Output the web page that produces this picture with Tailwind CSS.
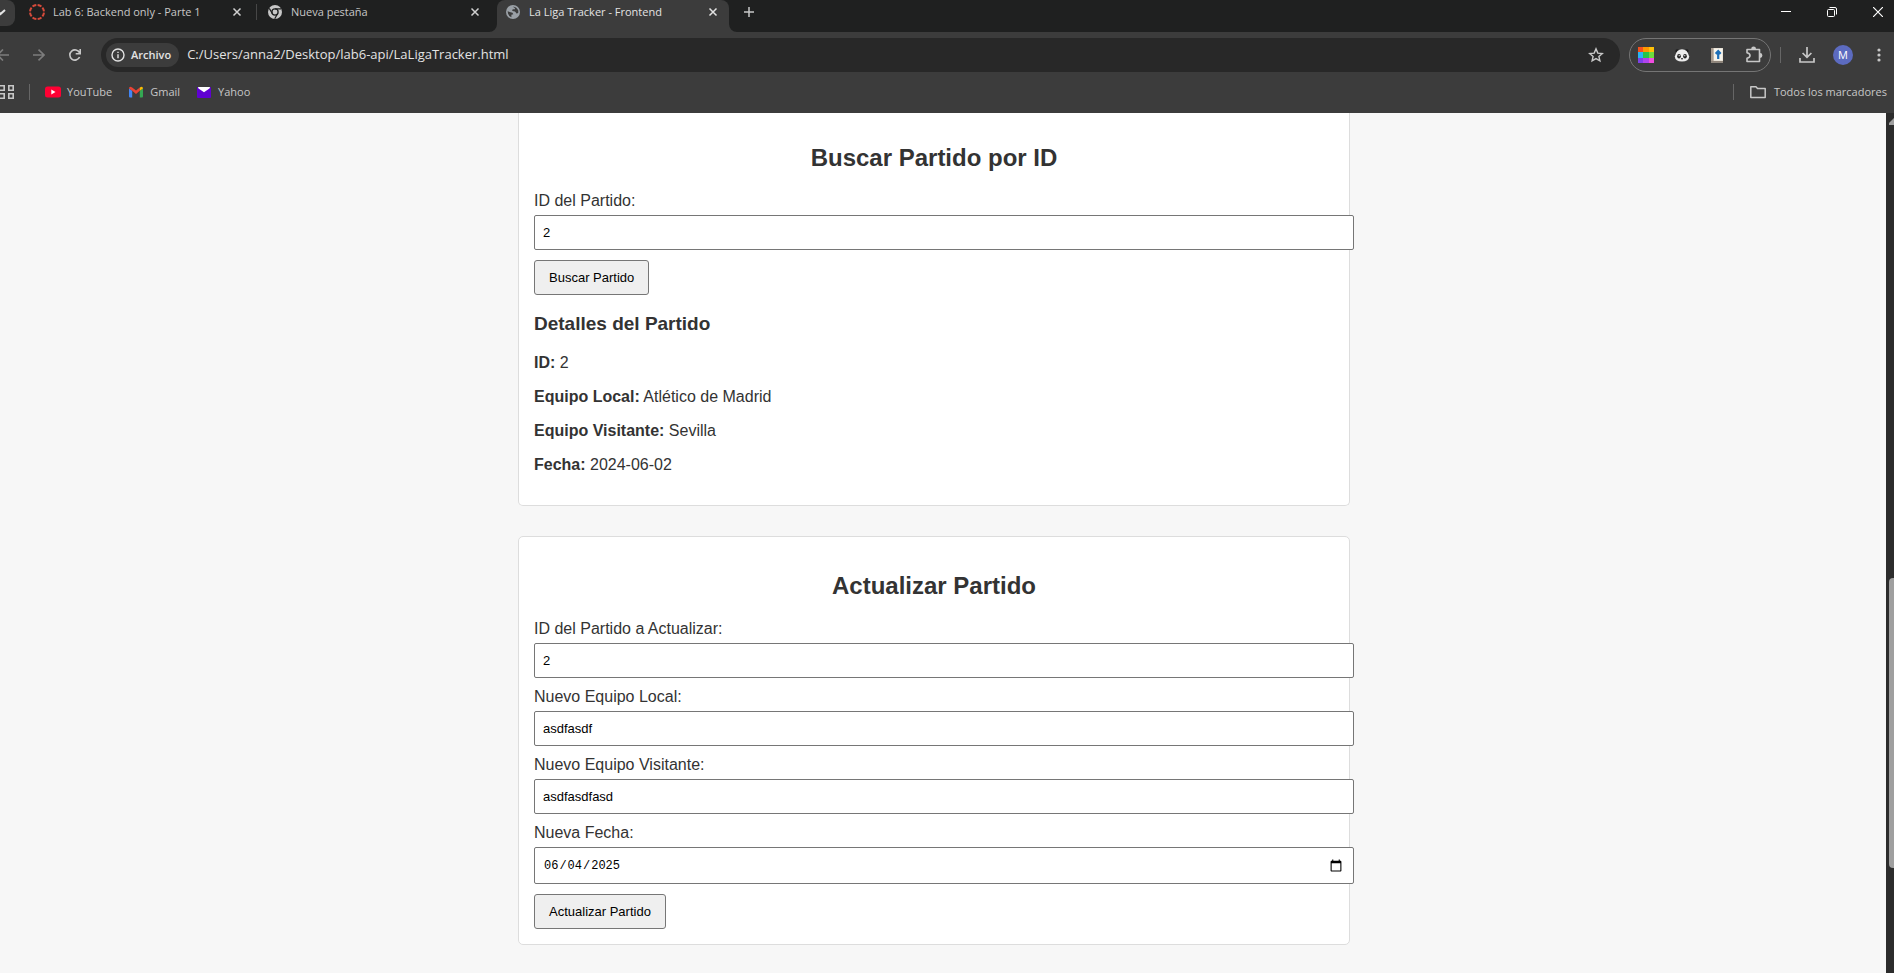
<!DOCTYPE html>
<html lang="es">
<head>
<meta charset="utf-8">
<title>La Liga Tracker - Frontend</title>
<script src="https://cdn.jsdelivr.net/npm/@tailwindcss/browser@4"></script>
</head>
<body class="h-screen overflow-hidden flex flex-col bg-[#f7f7f7] font-['Liberation_Sans',Arial,sans-serif] text-[#333]">
<header class="shrink-0 h-[113px] bg-[#3c3c3c] text-[#c7c7c7] font-['Open_Sans','Noto_Sans',sans-serif] text-[11px]">
  <!-- Tab strip -->
  <div class="h-8 bg-[#1f2020] flex items-start">
    <button aria-label="Buscar pestañas" class="w-[15px] h-[26px] bg-[#3c3c3c] rounded-br-lg rounded-tr-lg shrink-0">
      <svg class="block w-[15px] h-[26px]" viewBox="0 0 15 26" fill="none" stroke="#e3e3e3" stroke-width="2"><path d="M-3 10 L0.5 14 L5 10"/></svg>
    </button>
    <div class="w-[241px] h-6 flex items-center pl-[14px] pr-[14px]">
      <svg class="w-4 h-4 shrink-0" viewBox="0 0 16 16" fill="none" stroke="#d64b3b" stroke-width="2"><circle cx="8" cy="8" r="7" pathLength="80" stroke-dasharray="7.5 2.5" stroke-dashoffset="-1.2"/></svg>
      <span class="ml-2 grow whitespace-nowrap">Lab 6: Backend only - Parte 1</span>
      <button aria-label="Cerrar pestaña"><svg class="w-[10px] h-[10px]" viewBox="0 0 10 10" stroke="#d0d0d0" stroke-width="1.5"><path d="M1.5 1.5l7 7M8.500 1.500l-7 7"/></svg></button>
    </div>
    <div class="w-[241px] h-6 flex items-center">
      <span class="w-px h-4 bg-[#474747]"></span>
      <svg class="w-[14px] h-[14px] ml-[11px] shrink-0" viewBox="0 0 14 14"><circle cx="7" cy="7" r="7" fill="#c7c7c7"/><circle cx="7" cy="7" r="3.100" fill="#c7c7c7" stroke="#1f2020" stroke-width="1.300"/><path d="M7 3.900H13M4.300 8.500L1.300 3.400M9.700 8.500L6.700 13.800" stroke="#1f2020" stroke-width="1.200"/></svg>
      <span class="ml-[9px] grow">Nueva pestaña</span>
      <button aria-label="Cerrar pestaña" class="mr-[17px]"><svg class="w-[10px] h-[10px]" viewBox="0 0 10 10" stroke="#d0d0d0" stroke-width="1.500"><path d="M1.500 1.500l7 7M8.500 1.500l-7 7"/></svg></button>
    </div>
    <div class="relative w-[232px] h-8 rounded-t-lg bg-[#3c3c3c] text-[#e3e3e3] pb-2 flex items-center pl-[9px] pr-[11px]">
      <svg class="absolute bottom-0 -left-2 w-2 h-2" viewBox="0 0 8 8" fill="#3c3c3c"><path d="M8 0V8H0A8 8 0 0 0 8 0Z"/></svg>
      <svg class="absolute bottom-0 -right-2 w-2 h-2" viewBox="0 0 8 8" fill="#3c3c3c"><path d="M0 0V8H8A8 8 0 0 1 0 0Z"/></svg>
      <svg class="w-[14px] h-[14px] shrink-0" viewBox="0 0 14 14"><circle cx="7" cy="7" r="7" fill="#9aa0a6"/><path d="M1.600 6.300L4.600 7.200Q7 7.200 7.300 9.200L5.400 9.800V12.200Q1.600 11 1.600 6.300ZM6.800 1.700Q10.500 1.400 12.300 5.500L12.300 7.700Q10.400 9.300 9.700 7.200Q9 6 7.300 6.200L6 5.400L6.800 4.300H8.900V3Z" fill="#3c3c3c"/></svg>
      <span class="ml-[9px] grow whitespace-nowrap">La Liga Tracker - Frontend</span>
      <button aria-label="Cerrar pestaña"><svg class="w-[10px] h-[10px]" viewBox="0 0 10 10" stroke="#e3e3e3" stroke-width="1.500"><path d="M1.500 1.500l7 7M8.500 1.500l-7 7"/></svg></button>
    </div>
    <button aria-label="Nueva pestaña" class="ml-[14px] h-6 flex items-center"><svg class="w-3 h-3" viewBox="0 0 12 12" stroke="#c7c7c7" stroke-width="1.500"><path d="M1 6H11M6 1V11"/></svg></button>
    <div class="ml-auto h-6 flex items-center gap-9 pr-[11px]">
      <button aria-label="Minimizar"><svg class="w-[10px] h-[10px]" viewBox="0 0 10 10" stroke="#fff"><path d="M0 4.500H10"/></svg></button>
      <button aria-label="Restaurar"><svg class="w-[10px] h-[10px]" viewBox="0 0 10 10" fill="none" stroke="#fff"><rect x="0.500" y="2.500" width="7" height="7" rx="1"/><path d="M2.500 .5H8Q9.500 .5 9.500 2V7.500"/></svg></button>
      <button aria-label="Cerrar"><svg class="w-[10px] h-[10px]" viewBox="0 0 10 10" stroke="#fff" stroke-width="1.200"><path d="M0 0L10 10M10 0L0 10"/></svg></button>
    </div>
  </div>
  <!-- Toolbar -->
  <div class="h-[46px] flex items-center pr-[13px]">
    <button aria-label="Atrás" class="shrink-0"><svg class="w-[9px] h-3" viewBox="0 0 9 12" fill="none" stroke="#7c7c7c" stroke-width="1.600"><path d="M9 6H-3M3 .5L-2.500 6L3 11.500"/></svg></button>
    <button aria-label="Adelante" class="ml-6 shrink-0"><svg class="w-3 h-3" viewBox="0 0 12 12" fill="none" stroke="#7c7c7c" stroke-width="1.600"><path d="M0 6H11M5.500 .7L11 6L5.500 11.300"/></svg></button>
    <button aria-label="Recargar" class="ml-6 shrink-0"><svg class="w-3 h-3" viewBox="0 0 12 12" fill="none" stroke="#c7c7c7" stroke-width="1.600"><path d="M10.600 8A5.100 5.100 0 1 1 10.500 3.700L11 4.500M11.200 0V4.700H6.700"/></svg></button>
    <div class="ml-5 h-[34px] grow rounded-full bg-[#282828] flex items-center pl-[5px] pr-4">
      <button class="h-6 rounded-full bg-[#3c3c3c] flex items-center gap-[6px] pl-[5px] pr-2 text-[#e3e3e3] font-semibold">
        <svg class="w-[14px] h-[14px]" viewBox="0 0 14 14" fill="none" stroke="#e3e3e3" stroke-width="1.400"><circle cx="7" cy="7" r="6"/><path d="M7 6.300V10.300M7 3.700V5.100"/></svg>Archivo</button>
      <input aria-label="Dirección" type="text" value="C:/Users/anna2/Desktop/lab6-api/LaLigaTracker.html" class="ml-2 grow bg-transparent text-[13px] text-[#e3e3e3] outline-none">
      <button aria-label="Añadir a marcadores"><svg class="w-4 h-4" viewBox="0 0 16 16" fill="none" stroke="#c7c7c7" stroke-width="1.400"><path d="M8 1.900L9.800 6.100L14.300 6.500L10.900 9.500L11.900 13.900L8 11.600L4.100 13.900L5.100 9.500L1.700 6.500L6.200 6.100Z"/></svg></button>
    </div>
    <div class="ml-[9px] w-[142px] h-[34px] shrink-0 rounded-full border border-[#757575] flex items-center justify-between pl-2 pr-[7px]">
      <button aria-label="Paleta de colores"><svg class="w-4 h-4" viewBox="0 0 16 16"><path fill="#f4511e" d="M0 0H6V5H0z"/><path fill="#ff9800" d="M5 0H11V5H5z"/><path fill="#ffc107" d="M11 0H16V5H11z"/><path fill="#29b6f6" d="M0 5H5V11H0z"/><path fill="#26c64a" d="M5 5H11V11H5z"/><path fill="#6ddc3c" d="M11 5H16V11H11z"/><path fill="#7e40e8" d="M0 11H5V16H0z"/><path fill="#b044ee" d="M5 11H11V16H5z"/><path fill="#f04ce0" d="M11 11H16V16H11z"/></svg></button>
      <button aria-label="Panda"><svg class="w-4 h-4" viewBox="0 0 16 16"><circle cx="3.200" cy="4" r="1.800" fill="#1c1c1c"/><circle cx="12.800" cy="4" r="1.800" fill="#1c1c1c"/><path d="M8 2.200Q13.500 2.200 15.200 9.500Q14.800 14.600 8 14.600Q1.200 14.600 .8 9.500Q2.500 2.200 8 2.200" fill="#ececec"/><ellipse cx="5" cy="9.200" rx="1.800" ry="2.200" fill="#242424"/><ellipse cx="11" cy="9.200" rx="1.800" ry="2.200" fill="#242424"/><circle cx="5.200" cy="8.700" r=".6" fill="#fff"/><circle cx="10.800" cy="8.700" r=".6" fill="#fff"/><ellipse cx="8" cy="11.800" rx="1" ry=".7" fill="#222"/></svg></button>
      <button aria-label="Lector"><svg class="w-4 h-4" viewBox="0 0 16 16"><path d="M2 1H14V15.500H2z" fill="#ded6c8"/><path d="M2 1H4.500V14H2z" fill="#a99c90"/><path d="M5 1.500H13.500V13.500H5z" fill="#f7f4ec"/><path d="M2 14H14V15.500H2z" fill="#8e8378"/><path d="M9.200 2.500L12.500 6L11 7.500H10.300V12H8.100V7.500H7.400L5.900 6Z" fill="#1d6fb8"/></svg></button>
      <button aria-label="Extensiones"><svg class="w-[18px] h-[18px]" viewBox="0 0 18 18" fill="none" stroke="#c7c7c7" stroke-width="1.600" stroke-linejoin="round"><path d="M2 3.500H14.500V15.500H2V12.300Q5 11.500 5 9.500Q5 7.500 2 6.700Z"/><path d="M7 3A1.600 1.600 0 0 1 10.200 3M15 7.900A1.600 1.600 0 0 1 15 11.100" fill="#c7c7c7"/></svg></button>
    </div>
    <span class="ml-[9px] w-px h-4 shrink-0 bg-[#666]"></span>
    <button aria-label="Descargas" class="ml-[18px] shrink-0"><svg class="w-4 h-4" viewBox="0 0 16 16" fill="none" stroke="#c7c7c7" stroke-width="1.700"><path d="M8 0V10M3.600 6L8 10.400L12.400 6M1 11V15H15V11"/></svg></button>
    <button aria-label="Perfil" class="ml-[18px] w-5 h-5 shrink-0 rounded-full bg-[#5c6bc0] text-white text-[11px]">M</button>
    <button aria-label="Menú" class="ml-6 shrink-0"><svg class="w-1 h-[14px]" viewBox="0 0 4 14" fill="#c7c7c7"><circle cx="2" cy="2" r="1.600"/><circle cx="2" cy="7" r="1.600"/><circle cx="2" cy="12" r="1.600"/></svg></button>
  </div>
  <!-- Bookmarks -->
  <nav class="h-7 flex items-center pr-[7px]">
    <button aria-label="Aplicaciones"><svg class="w-[14px] h-[14px]" viewBox="0 0 14 14" fill="none" stroke="#c7c7c7" stroke-width="1.600"><path d="M-1 .8H4.200V5.200H-1M8.800 .8H13.200V5.200H8.800ZM-1 8.800H4.200V13.200H-1M8.800 8.800H13.200V13.200H8.800Z"/></svg></button>
    <span class="ml-[15px] w-px h-4 bg-[#666]"></span>
    <a href="#youtube" class="ml-[15px] flex items-center gap-[6px]"><svg class="w-4 h-4" viewBox="0 0 16 16"><rect y="2.500" width="16" height="11" rx="2.500" fill="#ff0033"/><path d="M6.300 5.600L10.500 8L6.300 10.400Z" fill="#fff"/></svg>YouTube</a>
    <a href="#gmail" class="ml-4 flex items-center gap-[6px]"><svg class="w-4 h-4" viewBox="0 0 16 16"><path d="M1 4.500L4.200 6.800V13.500H2Q1 13.500 1 12.500z" fill="#4285f4"/><path d="M11.800 6.800L15 4.500V12.500Q15 13.500 14 13.500H11.800z" fill="#34a853"/><path d="M1 4.500Q1.200 1.500 4.200 3.500L8 6.500L11.800 3.500V6.800L8 9.900L4.200 6.800V6.800L1 4.500" fill="#ea4335"/><path d="M11.800 3.500Q14.800 1.500 15 4.500L11.800 6.800Z" fill="#fbbc04"/></svg>Gmail</a>
    <a href="#yahoo" class="ml-4 flex items-center gap-[6px]"><svg class="w-4 h-4" viewBox="0 0 16 16"><rect x="1" y="3" width="14" height="11" rx="1" fill="#5f01d1"/><path d="M2 3H14L13.500 4.600L8 8.200L2.500 4.600Z" fill="#fff"/></svg>Yahoo</a>
    <span class="ml-auto w-px h-4 bg-[#666]"></span>
    <button class="ml-4 flex items-center gap-2"><svg class="w-4 h-4" viewBox="0 0 16 16" fill="none" stroke="#c7c7c7" stroke-width="1.500" stroke-linejoin="round"><path d="M.8 2.800H6L7.500 4.500H15.200V13.500H.8Z"/></svg>Todos los marcadores</button>
  </nav>
</header>
<div class="grow min-h-0 flex">
  <main class="grow overflow-hidden pr-[18px]">
    <section class="mx-auto w-full max-w-[832px] bg-white border border-t-0 border-[#ddd] rounded-b-[5px] px-[15px] pt-[11px] pb-[15px]">
      <h2 class="my-5 text-2xl leading-7 font-bold text-center">Buscar Partido por ID</h2>
      <form>
        <label for="match-id" class="block leading-[18px]">ID del Partido:</label>
        <input id="match-id" type="text" value="2" class="block mt-[5px] mb-[10px] w-[calc(100%+20px)] h-[35px] px-2 border border-[#767676] rounded-xs bg-white text-black text-[13px]">
        <button type="button" class="block h-[35px] px-[14px] border border-[#767676] rounded-[3px] bg-[#efefef] text-black text-[13px]">Buscar Partido</button>
      </form>
      <h3 class="mt-[18px] mb-5 text-[19px] leading-[21px] font-bold">Detalles del Partido</h3>
      <div class="flex flex-col gap-4 pb-4 leading-[18px]">
        <p><strong>ID:</strong> 2</p>
        <p><strong>Equipo Local:</strong> Atlético de Madrid</p>
        <p><strong>Equipo Visitante:</strong> Sevilla</p>
        <p><strong>Fecha:</strong> 2024-06-02</p>
      </div>
    </section>
    <section class="mx-auto mt-[30px] w-full max-w-[832px] bg-white border border-[#ddd] rounded-[5px] p-[15px]">
      <h2 class="my-5 text-2xl leading-7 font-bold text-center">Actualizar Partido</h2>
      <form>
        <label for="upd-id" class="block leading-[18px]">ID del Partido a Actualizar:</label>
        <input id="upd-id" type="text" value="2" class="block mt-[5px] mb-[10px] w-[calc(100%+20px)] h-[35px] px-2 border border-[#767676] rounded-xs bg-white text-black text-[13px]">
        <label for="upd-home" class="block leading-[18px]">Nuevo Equipo Local:</label>
        <input id="upd-home" type="text" value="asdfasdf" class="block mt-[5px] mb-[10px] w-[calc(100%+20px)] h-[35px] px-2 border border-[#767676] rounded-xs bg-white text-black text-[13px]">
        <label for="upd-away" class="block leading-[18px]">Nuevo Equipo Visitante:</label>
        <input id="upd-away" type="text" value="asdfasdfasd" class="block mt-[5px] mb-[10px] w-[calc(100%+20px)] h-[35px] px-2 border border-[#767676] rounded-xs bg-white text-black text-[13px]">
        <label for="upd-date" class="block leading-[18px]">Nueva Fecha:</label>
        <input id="upd-date" type="date" value="2025-06-04" class="block mt-[5px] mb-[10px] w-[calc(100%+20px)] h-[37px] px-2 border border-[#767676] rounded-xs bg-white text-black text-xs font-['Liberation_Mono',monospace] [&::-webkit-calendar-picker-indicator]:w-[14px] [&::-webkit-calendar-picker-indicator]:h-[14px]">
        <button type="button" class="block h-[35px] px-[14px] border border-[#767676] rounded-[3px] bg-[#efefef] text-black text-[13px]">Actualizar Partido</button>
      </form>
    </section>
  </main>
  <!-- Scrollbar -->
  <div class="w-2 shrink-0 overflow-hidden bg-[#2c2c2c] flex flex-col items-end">
    <div class="grow-[461] basis-0 pt-1"><svg class="w-[5px] h-2" viewBox="0 0 5 8" fill="#9f9f9f"><path d="M0 8V6L5 1V8Z"/></svg></div>
    <div class="grow-[290] basis-0 w-[5px] rounded-l-[4px] bg-[#9f9f9f]"></div>
    <div class="grow-[105] basis-0"></div>
  </div>
</div>
</body>
</html>
